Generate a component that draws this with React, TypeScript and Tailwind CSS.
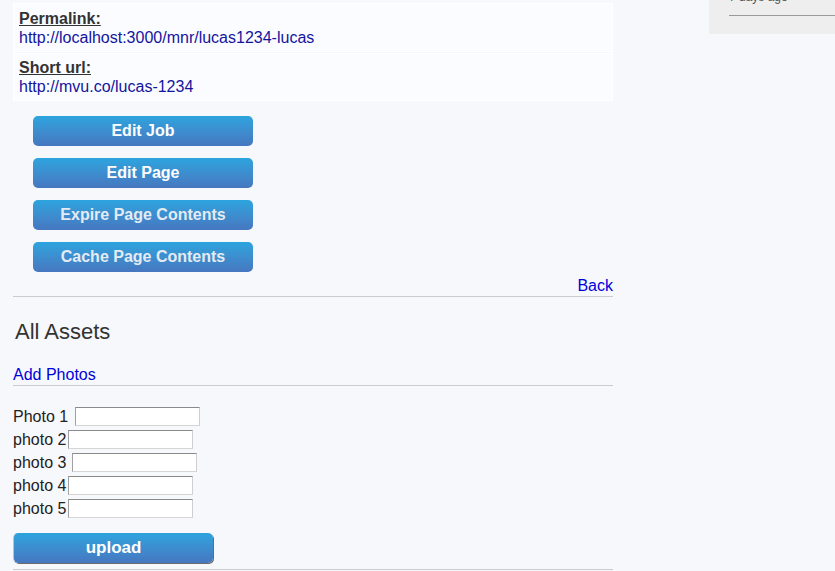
const font = { fontFamily: '"Liberation Sans", Helvetica, Arial, sans-serif' };

function BlueButton({ label, dim }: { label: string; dim?: boolean }) {
  return (
    <button
      className={`w-[220px] h-[30px] rounded-[5px] bg-gradient-to-b from-[#2ba4de] to-[#4577c0] text-[16px] font-bold leading-[30px] block mb-[12px] ${
        dim ? 'text-[#e4ebf3]' : 'text-white'
      }`}
    >
      {label}
    </button>
  );
}

function PhotoRow({ label, gap }: { label: string; gap: number }) {
  return (
    <div className="h-[23px] flex items-center text-[16px] text-[#222]">
      <span>{label}</span>
      <input
        className={`w-[125px] h-[19px] bg-white border border-t-[#8a8a8a] border-l-[#a0a0a0] border-r-[#cfcfcf] border-b-[#d5d5d5] ${
          gap === 7 ? 'ml-[7px]' : gap === 6 ? 'ml-[6px]' : 'ml-[2px]'
        }`}
      />
    </div>
  );
}

export default function App() {
  return (
    <div className="min-h-screen bg-[#f7f8fc] flex" style={font}>
      <div className="w-[600px] ml-[13px] pt-[3px]">
        <div className="bg-[#fbfcff] border border-white px-[5px] pt-[5px] pb-[4px] leading-[19px]">
          <div className="text-[16px] font-bold text-[#333] underline">Permalink:</div>
          <div className="text-[16px] text-[#14149e]">http://localhost:3000/mnr/lucas1234-lucas</div>
        </div>
        <div className="bg-[#fbfcff] border border-white px-[5px] pt-[4px] pb-[4px] mt-[1px] leading-[19px]">
          <div className="text-[16px] font-bold text-[#333] underline">Short url:</div>
          <div className="text-[16px] text-[#14149e]">http://mvu.co/lucas-1234</div>
        </div>

        <div className="ml-[20px] mt-[15px]">
          <BlueButton label="Edit Job" />
          <BlueButton label="Edit Page" />
          <BlueButton label="Expire Page Contents" dim />
          <BlueButton label="Cache Page Contents" dim />
        </div>

        <div className="text-right text-[16px] leading-[18px] text-[#0000dd] -mt-[7px]">Back</div>
        <div className="h-px bg-[#cccccc] mt-[1px]" />

        <h2 className="text-[22px] leading-[24px] text-[#333] ml-[2px] mt-[23px]">All Assets</h2>
        <div className="text-[16px] leading-[18px] text-[#0000dd] mt-[22px]">Add Photos</div>
        <div className="h-px bg-[#cccccc] mt-[1px]" />

        <div className="mt-[19px]">
          <PhotoRow label="Photo 1" gap={7} />
          <PhotoRow label="photo 2" gap={2} />
          <PhotoRow label="photo 3" gap={6} />
          <PhotoRow label="photo 4" gap={2} />
          <PhotoRow label="photo 5" gap={2} />
        </div>

        <button className="mt-[13px] w-[200px] h-[30px] rounded-[5px] bg-gradient-to-b from-[#2ba4de] to-[#4577c0] border-l border-[#b8c4d0] shadow-[1px_1px_0_#6b6b6b] text-white text-[17px] font-bold leading-[30px]">
          upload
        </button>
        <div className="h-px bg-[#cccccc] mt-[6px]" />
      </div>

      <div className="ml-auto w-[126px] h-[34px] bg-[#eeeeee] overflow-hidden">
        <div className="ml-[20px] -mt-[10px] text-[12px] leading-[14px] text-[#555]">7 days ago</div>
        <div className="ml-[20px] mt-[11px] h-px bg-[#999]" />
      </div>
    </div>
  );
}
